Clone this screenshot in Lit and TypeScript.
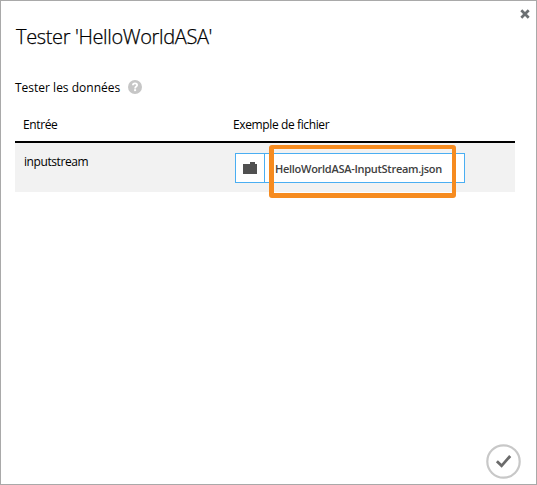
import { LitElement, html, css } from "lit";
import { customElement, property } from "lit/decorators.js";

@customElement("file-picker")
class FilePicker extends LitElement {
  @property() name = "";
  static styles = css`
    :host { display: flex; position: relative; width: 230px; height: 30px; box-sizing: border-box; }
    .browse, .file { box-sizing: border-box; height: 30px; border: 1px solid #4aaef2; background: #fff; display: flex; align-items: center; }
    .browse { width: 30px; justify-content: center; flex: none; }
    .file { flex: 1; margin-left: -1px; padding-left: 10px; color: #404040; font-weight: 600; font-size: 11px; letter-spacing: -0.28px; white-space: nowrap; }
    .name { padding-top: 1px; line-height: 19px; }
    .highlight { position: absolute; left: 34px; top: -8px; width: 187px; height: 53px; box-sizing: border-box; border: solid #f68b1f; border-width: 4px 4px 5px 5px; border-radius: 3px; }
    svg { display: block; }
  `;
  render() {
    return html`
      <div class="browse">
        <svg width="14" height="12" viewBox="0 0 14 12"><path fill="#505050" d="M0 2H7V0H12V2H14V12H0Z" /></svg>
      </div>
      <div class="file"><span class="name">${this.name}</span></div>
      <div class="highlight"></div>
    `;
  }
}

@customElement("app-root")
class AppRoot extends LitElement {
  static styles = css`
    :host { display: block; height: 485px; font-family: "Open Sans", "Noto Sans", sans-serif; color: #000; }
    .dialog { box-sizing: border-box; width: 537px; height: 485px; border: 1px solid #a9a9a9; background: #fff; display: flex; flex-direction: column; padding: 0 21px 0 14px; white-space: nowrap; }
    .top { display: flex; justify-content: flex-end; height: 22px; margin-right: -15px; padding-top: 8px; box-sizing: border-box; }
    svg { display: block; }
    .title { margin: 0 0 0 1px; height: 28px; line-height: 28px; font-size: 20px; font-weight: 300; letter-spacing: -0.36px; -webkit-text-stroke: 0.25px #000; }
    .sub { display: flex; align-items: center; gap: 8px; height: 18px; margin-top: 26px; font-size: 12px; }
    .subtext { letter-spacing: 0; padding-top: 2px; }
    .sub svg { margin-top: 1px; }
    .grid { display: grid; grid-template-columns: 210px 1fr; }
    .head { margin-top: 19px; height: 27px; padding: 0 0 0 8px; border-bottom: 2px solid #000; font-size: 12px; line-height: 22px; letter-spacing: -0.38px; }
    .row { height: 49px; background: #f2f2f2; padding-left: 9px; grid-template-columns: 211px 1fr; font-size: 12px; line-height: 18px; box-sizing: border-box; }
    .cell { padding-top: 10px; }
    .stream { letter-spacing: -0.42px; }
    .bottom { margin-top: auto; display: flex; justify-content: flex-end; margin-right: -6px; padding-bottom: 5px; }
    .entry, .example, .stream { justify-self: start; }
  `;
  render() {
    return html`
      <div class="dialog">
        <div class="top">
          <svg width="10" height="10" viewBox="0 0 10 10"><path d="M1.3 1.3L8.7 8.7M8.7 1.3L1.3 8.7" stroke="#6c7073" stroke-width="2.7" /></svg>
        </div>
        <h1 class="title">Tester 'HelloWorldASA'</h1>
        <div class="sub">
          <span class="subtext">Tester les données</span>
          <svg width="14" height="14" viewBox="0 0 14 14"><circle cx="7" cy="7" r="7" fill="#c6c6c6" /><path d="M4.9 5.2C4.9 2.8 9.1 2.8 9.1 5.2C9.1 6.7 7.1 6.5 7.1 8.4" fill="none" stroke="#fff" stroke-width="1.8" /><rect x="6.1" y="9.2" width="2" height="1.9" fill="#fff" /></svg>
        </div>
        <div class="grid head"><span class="entry">Entrée</span><span class="example">Exemple de fichier</span></div>
        <div class="grid row">
          <span class="cell stream">inputstream</span>
          <div class="cell"><file-picker name="HelloWorldASA-InputStream.json"></file-picker></div>
        </div>
        <div class="bottom">
          <svg width="35" height="35" viewBox="0 0 35 35"><circle cx="17.5" cy="17.5" r="16.2" fill="#fff" stroke="#c8c8c8" stroke-width="2.2" /><path d="M10.9 17.2L15.6 21.8L24.2 12" fill="none" stroke="#6b6b6b" stroke-width="2.8" /></svg>
        </div>
      </div>
    `;
  }
}
